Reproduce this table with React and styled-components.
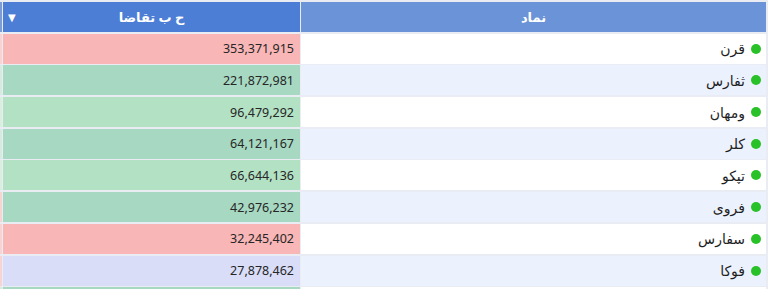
import React from 'react';
import styled, { createGlobalStyle } from 'styled-components';

/* ~~~~~~ Styles ~~~~~~~ */

const GlobalStyle = createGlobalStyle`
  html, body {
    margin: 0;
    padding: 0;
    background: #ffffff;
  }
  body {
    font-family: "Noto Sans", "DejaVu Sans", sans-serif;
    overflow: hidden;
  }
`;

const Table = styled.div`
  direction: rtl;
  display: grid;
  grid-template-columns: 465px 297px 3px;
  grid-auto-rows: 30px;
  column-gap: 1px;
  row-gap: 1.7px;
  padding: 2px 2px 0 0;
  background: #e9edf3;
  width: 768px;
  height: 289px;
  overflow: hidden;
  box-sizing: border-box;
`;

const HeadCell = styled.div`
  position: relative;
  display: flex;
  align-items: center;
  justify-content: center;
  background: ${(p) => p.bg};
  color: #ffffff;
  font-size: 13px;
  font-weight: 700;
`;

const SortArrow = styled.span`
  position: absolute;
  left: 5px;
  top: 8px;
  font-size: 10px;
  color: #ffffff;
`;

const SymbolCell = styled.div`
  display: flex;
  align-items: center;
  gap: 6px;
  padding-right: 5px;
  background: ${(p) => (p.odd ? '#ecf2fd' : '#ffffff')};
  color: #1e1e1e;
  font-size: 14px;
`;

const Dot = styled.span`
  width: 10px;
  height: 10px;
  border-radius: 50%;
  background: #28c128;
  flex-shrink: 0;
`;

const ValueCell = styled.div`
  display: flex;
  align-items: center;
  justify-content: flex-end;
  padding-right: 6px;
  background: ${(p) => p.bg};
  color: #262626;
  font-size: 12.5px;
  direction: ltr;
`;

const EdgeCell = styled.div`
  background: ${(p) => p.bg};
`;

/* ~~~~~~ Data ~~~~~~~ */

const colors = {
  red: '#f8b6b6',
  green: '#a6d8c2',
  light: '#b3e1c4',
  blue: '#d9ddf8'
};

const rows = [
  { name: 'قرن', value: '353,371,915', tone: 'red', edge: '#f6d4d4' },
  { name: 'ثفارس', value: '221,872,981', tone: 'green', edge: '#d6eadf' },
  { name: 'ومهان', value: '96,479,292', tone: 'light', edge: '#d9eedf' },
  { name: 'کلر', value: '64,121,167', tone: 'green', edge: '#d6eadf' },
  { name: 'تپکو', value: '66,644,136', tone: 'light', edge: '#d9eedf' },
  { name: 'فروی', value: '42,976,232', tone: 'green', edge: '#f6d4d4' },
  { name: 'سفارس', value: '32,245,402', tone: 'red', edge: '#f6d4d4' },
  { name: 'فوکا', value: '27,878,462', tone: 'blue', edge: '#f6d4d4' }
];

/* ~~~~~~ Components ~~~~~~~ */

const App = () => (
  <>
    <GlobalStyle />
    <Table>
      <HeadCell bg="#6b93d8">نماد</HeadCell>
      <HeadCell bg="#4c7ed5">
        ح ب تقاضا
        <SortArrow>▼</SortArrow>
      </HeadCell>
      <EdgeCell bg="#7d9cd6" />
      {rows.map((row, i) => (
        <React.Fragment key={row.name}>
          <SymbolCell odd={i % 2 === 1}>
            <Dot />
            {row.name}
          </SymbolCell>
          <ValueCell bg={colors[row.tone]}>{row.value}</ValueCell>
          <EdgeCell bg={row.edge} />
        </React.Fragment>
      ))}
      {/* next row, only its top edge is in view */}
      <SymbolCell />
      <ValueCell bg={colors.green} />
      <EdgeCell bg="#d6eadf" />
    </Table>
  </>
);

export default App;
